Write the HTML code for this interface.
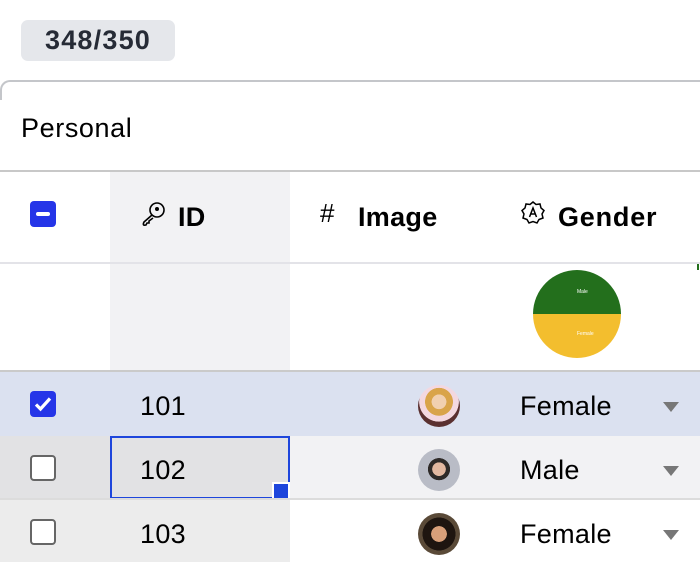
<!DOCTYPE html>
<html><head><style>
*{margin:0;padding:0;box-sizing:border-box}
body{width:700px;height:562px;overflow:hidden;background:#fff;font-family:"Liberation Sans",Arial,sans-serif;position:relative;color:#000}
.a{position:absolute}
.badge{left:21px;top:20px;width:154px;height:41px;background:#e5e7eb;border-radius:7px;font-weight:bold;font-size:27px;color:#262b36;text-align:center;line-height:41px;letter-spacing:1.2px}
.frame{left:0;top:80px;width:40px;height:20px;border-top:2px solid #c4c6ca;border-left:2px solid #c4c6ca;border-top-left-radius:10px}
.hl{height:2px;left:0;width:700px}
.cell{font-size:27px;line-height:1;letter-spacing:0.3px}
.cb{width:26px;height:26px;border-radius:4px;left:30px}
.av{width:42px;height:42px;border-radius:50%;left:418px}
.tri{left:663px;width:0;height:0;border-left:8px solid transparent;border-right:8px solid transparent;border-top:10px solid #777}
</style></head><body>
<div class="a badge">348/350</div>
<div class="a frame"></div>
<div class="a" style="left:10px;top:80px;width:690px;height:2px;background:#c4c6ca"></div>
<div class="a cell" style="left:21px;top:115px;letter-spacing:0.6px">Personal</div>
<div class="a hl" style="top:170px;background:#c8c8c8"></div>
<div class="a" style="left:110px;top:172px;width:180px;height:199px;background:#f2f2f4"></div>
<div class="a hl" style="top:262px;background:#e3e3e8"></div>
<div class="a cb" style="top:201px;background:#2535e8"><div class="a" style="left:6px;top:11px;width:14px;height:4px;background:#fff;border-radius:2px"></div></div>
<svg class="a" style="left:140px;top:200px" width="28" height="28" viewBox="0 0 28 28" fill="none" stroke="#000" stroke-width="1.6"><circle cx="17" cy="10" r="7"/><circle cx="17" cy="9" r="1.2" fill="#000"/><path d="M12 15 L4 22 Q2 26 6 25 L7 23 L9 23 L9 21 L13 18"/></svg>
<div class="a cell" style="left:178px;top:204px;font-weight:bold">ID</div>
<div class="a" style="left:320px;top:198px;font-size:26px">#</div>
<div class="a cell" style="left:358px;top:204px;font-weight:bold">Image</div>
<svg class="a" style="left:520px;top:200px" width="26" height="26" viewBox="0 0 26 26" fill="none" stroke="#000" stroke-width="1.5"><path d="M13 2 L16 4.5 L20 4 L21 8 L24 10.5 L22 14 L23 18 L19 19.5 L17 23 L13 21.5 L9 23 L7 19.5 L3 18 L4 14 L2 10.5 L5 8 L6 4 L10 4.5 Z"/><path d="M9.5 17 L13 8 L16.5 17 M10.8 14 H15.2"/></svg>
<div class="a cell" style="left:558px;top:204px;font-weight:bold;letter-spacing:0.8px">Gender</div>
<svg class="a" style="left:533px;top:270px" width="88" height="88" viewBox="0 0 88 88"><path d="M0 44 A44 44 0 0 1 88 44 Z" fill="#236f1c"/><path d="M0 44 A44 44 0 0 0 88 44 Z" fill="#f3be2e"/><text x="44" y="23" font-size="5" fill="#fff" font-family="Liberation Sans">Male</text><text x="44" y="65" font-size="5" fill="#fff" font-family="Liberation Sans">Female</text></svg>
<div class="a" style="left:697px;top:264px;width:2px;height:6px;background:#236f1c"></div>
<div class="a hl" style="top:370px;background:#cacaca"></div>
<div class="a" style="left:0;top:372px;width:700px;height:64px;background:#dbe1f0"></div>
<div class="a cb" style="top:391px;background:#2535e8"><svg width="26" height="26" viewBox="0 0 26 26"><path d="M6 13.5 L10.5 18 L20 7.5" stroke="#fff" stroke-width="3.2" fill="none"/></svg></div>
<div class="a cell" style="left:140px;top:393px">101</div>
<div class="a av" style="top:385px;background:radial-gradient(circle at 50% 40%,#f1d0b0 0 22%,#d9a44a 23% 42%,#f3d8e0 43% 60%,#5a3030 61%)"></div>
<div class="a cell" style="left:520px;top:393px">Female</div>
<div class="a tri" style="top:402px"></div>
<div class="a" style="left:0;top:436px;width:700px;height:63px;background:#f2f2f4"></div>
<div class="a" style="left:0;top:436px;width:110px;height:63px;background:#e2e2e4"></div>
<div class="a" style="left:110px;top:436px;width:180px;height:63px;background:#e2e2e4;border:2px solid #1e46dc"></div>
<div class="a" style="left:272px;top:482px;width:18px;height:18px;background:#1e46dc;border:2px solid #fff"></div>
<div class="a cb" style="top:455px;background:#fff;border:2px solid #666"></div>
<div class="a cell" style="left:140px;top:457px">102</div>
<div class="a av" style="top:449px;background:radial-gradient(circle at 50% 48%,#e2b8a0 0 22%,#2e2a28 23% 36%,#b9bcc6 37%)"></div>
<div class="a cell" style="left:520px;top:457px">Male</div>
<div class="a tri" style="top:466px"></div>
<div class="a hl" style="top:498px;background:#dcdcdc"></div>
<div class="a" style="left:0;top:500px;width:290px;height:62px;background:#ececec"></div>
<div class="a cb" style="top:519px;background:#fff;border:2px solid #666"></div>
<div class="a cell" style="left:140px;top:521px">103</div>
<div class="a av" style="top:513px;background:radial-gradient(circle at 50% 50%,#d9a07a 0 26%,#1e1510 27% 55%,#5a4a38 56%)"></div>
<div class="a cell" style="left:520px;top:521px">Female</div>
<div class="a tri" style="top:530px"></div>
</body></html>
